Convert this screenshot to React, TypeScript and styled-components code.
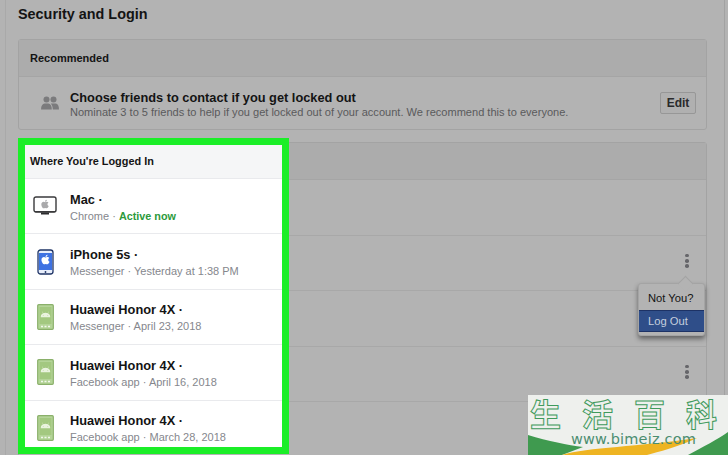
import React from "react";
import styled, { createGlobalStyle } from "styled-components";
import { FaApple, FaAndroid } from "react-icons/fa";

const Global = createGlobalStyle`
  html, body { margin: 0; padding: 0; background: #b3b3b3; }
  body { font-family: "Liberation Sans", Arial, sans-serif; }
`;

const Page = styled.div`
  position: relative;
  width: 728px;
  height: 455px;
  overflow: hidden;
  background: #b3b3b3;
`;

const Column = styled.main`
  box-sizing: border-box;
  width: 720px;
  height: 455px;
  margin-left: 5px;
  padding: 0 17px 0 12px;
  border-left: 1px solid #a9a9a9;
  border-right: 1px solid #a2a2a2;
  display: flex;
  flex-direction: column;
`;

const Title = styled.h1`
  flex: none;
  margin: 0;
  height: 39px;
  box-sizing: border-box;
  padding-top: 6px;
  font-size: 14.4px;
  line-height: 17px;
  font-weight: 700;
  color: #141414;
`;

const Card = styled.section`
  flex: none;
  border: 1px solid #a3a3a3;
  border-radius: 3px;
  margin-bottom: 12px;
  background: #b3b3b3;
`;

const CardHeader = styled.header`
  box-sizing: border-box;
  height: 37px;
  padding: 0 11px;
  display: flex;
  align-items: center;
  background: #acacac;
  border-bottom: 1px solid #a5a5a5;
  font-size: 11px;
  font-weight: 700;
  color: #141414;
`;

const RecommendRow = styled.div`
  height: 52px;
  display: flex;
  align-items: center;
  padding: 0 10px 0 22px;
`;

const FriendsSlot = styled.div`
  width: 29px;
  flex: none;
  display: flex;
`;

const RecommendText = styled.div`
  flex: 1;
  padding-top: 2px;
`;

const RecommendTitle = styled.div`
  font-size: 12.8px;
  line-height: 15px;
  font-weight: 700;
  color: #141414;
`;

const RecommendSub = styled.div`
  font-size: 11.06px;
  line-height: 14px;
  color: #5a5a5c;
`;

const EditButton = styled.button`
  box-sizing: border-box;
  width: 36px;
  height: 22px;
  padding: 0;
  border: 1px solid #979797;
  border-radius: 2px;
  background: #b0b0b0;
  font: 700 12px "Liberation Sans", Arial, sans-serif;
  color: #2a2a2c;
`;

const DeviceSlot = styled.div`
  box-sizing: border-box;
  height: 55.5px;
  display: flex;
  align-items: center;
  justify-content: flex-end;
  padding: 0 15px 4px 0;
  border-bottom: 1px solid #a8a8a8;
`;

const MenuAnchor = styled.div`
  position: relative;
  width: 8px;
  height: 14px;
  display: flex;
  flex-direction: column;
  align-items: center;
  justify-content: space-between;
`;

const Dot = styled.span`
  width: 3.6px;
  height: 3.6px;
  border-radius: 50%;
  background: #66666a;
`;

const Menu = styled.div`
  position: absolute;
  top: 29px;
  right: -14px;
  box-sizing: border-box;
  width: 67px;
  height: 53px;
  padding-top: 4px;
  background: #b3b3b3;
  border: 1px solid #a4a4a4;
  border-radius: 3px;
  box-shadow: 0 3px 5px rgba(0, 0, 0, 0.45);
  &::before {
    content: "";
    position: absolute;
    top: -6px;
    right: 13px;
    width: 10px;
    height: 10px;
    background: #b3b3b3;
    transform: rotate(45deg);
    border-top: 1px solid #a4a4a4;
    border-left: 1px solid #a4a4a4;
  }
`;

const MenuItem = styled.div<{ $active?: boolean }>`
  position: relative;
  box-sizing: border-box;
  height: 22px;
  padding-left: 9px;
  font-size: 11.2px;
  line-height: 20px;
  color: ${(p) => (p.$active ? "#c5cede" : "#141414")};
  background: ${(p) => (p.$active ? "#2f4e89" : "transparent")};
  border-top: ${(p) => (p.$active ? "1px solid #1d3265" : "none")};
  border-bottom: ${(p) => (p.$active ? "1px solid #1d3265" : "none")};
`;

const Highlight = styled.div`
  position: absolute;
  left: 18px;
  top: 138px;
  box-sizing: border-box;
  width: 271px;
  height: 316px;
  border: 7px solid #1bee28;
  background: #ffffff;
  overflow: hidden;
`;

const HighlightHeader = styled.header`
  box-sizing: border-box;
  height: 34px;
  padding: 0 5px 2px;
  display: flex;
  align-items: center;
  background: #f5f6f7;
  border-bottom: 1px solid #e9eaed;
  font-size: 10.9px;
  font-weight: 700;
  color: #141414;
`;

const DeviceRow = styled.div`
  box-sizing: border-box;
  height: 55.4px;
  display: flex;
  align-items: center;
  border-bottom: 1px solid #e9eaed;
`;

const IconCell = styled.div`
  width: 45px;
  flex: none;
  padding-right: 5px;
  box-sizing: border-box;
  display: flex;
  justify-content: center;
`;

const DeviceText = styled.div`
  padding-top: 2px;
`;

const DeviceName = styled.div`
  font-size: 12.8px;
  line-height: 16px;
  font-weight: 700;
  color: #141414;
  padding-bottom: 1px;
`;

const DeviceMeta = styled.div`
  font-size: 11px;
  line-height: 14px;
  color: #85878d;
`;

const Active = styled.span`
  font-size: 10.8px;
  font-weight: 700;
  color: #2c9a3c;
`;

const Watermark = styled.aside`
  position: absolute;
  right: 0;
  bottom: 0;
  width: 200px;
  height: 60px;
  overflow: hidden;
  background: #eef0ed;
`;

const Swoosh = styled.svg`
  position: absolute;
  left: 0;
  bottom: 0;
`;

const Hanzi = styled.div`
  position: absolute;
  left: 2px;
  top: 2px;
  display: flex;
  gap: 21px;
  font-family: "Noto Sans CJK SC", sans-serif;
  font-size: 31px;
  line-height: 32px;
  font-weight: 700;
  color: #eef0ed;
  -webkit-text-stroke: 1px #3f9a5c;
`;

const WatermarkUrl = styled.div`
  position: absolute;
  left: 43px;
  top: 34px;
  font-family: "DejaVu Sans", sans-serif;
  font-size: 14.5px;
  line-height: 20px;
  letter-spacing: 0.2px;
  color: #4b8d70;
`;

const FriendsIcon = () => (
  <svg width="18" height="14" viewBox="0 0 18 14" fill="#7b7b7d">
    <circle cx="5.5" cy="3.5" r="3" />
    <path d="M0 13.5c0-3.6 1.6-5.6 3.6-6h3.8c2 .4 3.4 2.4 3.4 6z" />
    <circle cx="12.5" cy="3.5" r="3" />
    <path d="M11.8 13.5c0-2.6-.8-4.6-2-6h5c2 .4 3.2 2.4 3.2 6z" />
  </svg>
);

const MacIcon = () => (
  <svg width="24" height="20" viewBox="0 0 24 20">
    <rect x="1" y="1" width="22" height="15" rx="2" fill="#fff" stroke="#3a3a3c" strokeWidth="1.4" />
    <path d="M2 15h20v1.2H2z" fill="#3a3a3c" />
    <rect x="8" y="16.5" width="8" height="2" fill="#2c2c2e" />
    <FaApple x="7" y="3" size="10" color="#a9a9ab" />
  </svg>
);

const IPhoneIcon = () => (
  <svg width="17" height="26" viewBox="0 0 17 26">
    <rect x="1" y="1" width="15" height="24" rx="2.5" fill="#e8eefb" stroke="#1f3466" strokeWidth="1.3" />
    <rect x="2" y="4" width="13" height="17" fill="#3e72e2" />
    <FaApple x="3" y="5" size="11" color="#ffffff" />
    <circle cx="8.5" cy="23" r="0.9" fill="#1f3466" />
  </svg>
);

const AndroidIcon = () => (
  <svg width="17" height="26" viewBox="0 0 17 26">
    <rect x="0.7" y="0.7" width="15.6" height="24.6" rx="1" fill="#b4d498" stroke="#8ab06a" strokeWidth="1.2" />
    <rect x="2.5" y="3" width="12" height="17" fill="#a3c880" />
    <FaAndroid x="3.5" y="6" size="10" color="#eaf3df" />
    <path d="M4 22.5h2M7.5 22.5h2M11 22.5h2" stroke="#f2f7ec" strokeWidth="1.4" />
  </svg>
);

const KebabDots = () => (
  <>
    <Dot />
    <Dot />
    <Dot />
  </>
);

const devices = [
  { name: "Mac", icon: <MacIcon />, meta: <>Chrome · <Active>Active now</Active></> },
  { name: "iPhone 5s", icon: <IPhoneIcon />, meta: "Messenger · Yesterday at 1:38 PM" },
  { name: "Huawei Honor 4X", icon: <AndroidIcon />, meta: "Messenger · April 23, 2018" },
  { name: "Huawei Honor 4X", icon: <AndroidIcon />, meta: "Facebook app · April 16, 2018" },
  { name: "Huawei Honor 4X", icon: <AndroidIcon />, meta: "Facebook app · March 28, 2018" },
];

export default function App() {
  return (
    <Page>
      <Global />
      <Column>
        <Title>Security and Login</Title>
        <Card>
          <CardHeader>Recommended</CardHeader>
          <RecommendRow>
            <FriendsSlot>
              <FriendsIcon />
            </FriendsSlot>
            <RecommendText>
              <RecommendTitle>Choose friends to contact if you get locked out</RecommendTitle>
              <RecommendSub>
                Nominate 3 to 5 friends to help if you get locked out of your account. We recommend this to everyone.
              </RecommendSub>
            </RecommendText>
            <EditButton>Edit</EditButton>
          </RecommendRow>
        </Card>
        <Card>
          <CardHeader />
          <DeviceSlot />
          <DeviceSlot>
            <MenuAnchor>
              <KebabDots />
              <Menu>
                <MenuItem>Not You?</MenuItem>
                <MenuItem $active>Log Out</MenuItem>
              </Menu>
            </MenuAnchor>
          </DeviceSlot>
          <DeviceSlot />
          <DeviceSlot>
            <MenuAnchor>
              <KebabDots />
            </MenuAnchor>
          </DeviceSlot>
          <DeviceSlot />
        </Card>
      </Column>

      <Highlight>
        <HighlightHeader>Where You're Logged In</HighlightHeader>
        {devices.map((d, i) => (
          <DeviceRow key={i}>
            <IconCell>{d.icon}</IconCell>
            <DeviceText>
              <DeviceName>{d.name} ·</DeviceName>
              <DeviceMeta>{d.meta}</DeviceMeta>
            </DeviceText>
          </DeviceRow>
        ))}
      </Highlight>

      <Watermark>
        <Swoosh width="200" height="60" viewBox="0 0 200 60">
          <path d="M0 40C20 46 40 50 55 52L34 60H0z" fill="#3f9a4f" />
          <path d="M34 60C60 52 110 52 169 43C150 52 130 57 119 60z" fill="#eeb422" />
          <path d="M160 60C175 52 190 44 200 37V60z" fill="#3f9a4f" />
        </Swoosh>
        <Hanzi>
          <span>生</span>
          <span>活</span>
          <span>百</span>
          <span>科</span>
        </Hanzi>
        <WatermarkUrl>www.bimeiz.com</WatermarkUrl>
      </Watermark>
    </Page>
  );
}
